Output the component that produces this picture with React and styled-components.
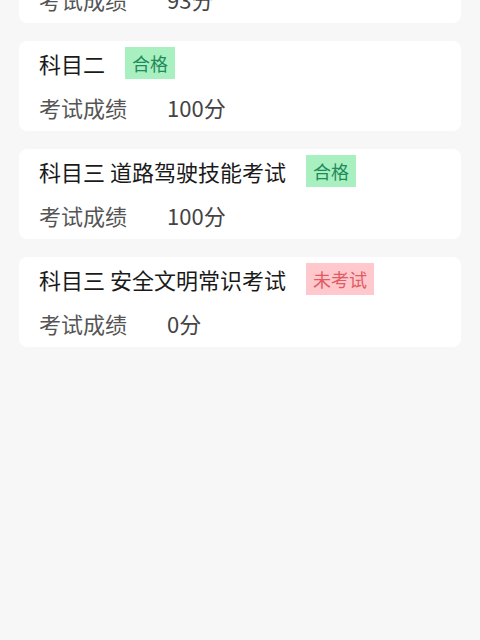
import React from 'react';
import styled, { createGlobalStyle } from 'styled-components';

const GlobalStyle = createGlobalStyle`
  html, body {
    margin: 0;
    padding: 0;
    background: #f7f7f7;
    font-family: "Noto Sans CJK SC", "Noto Sans", sans-serif;
  }
`;

const Page = styled.div`
  min-height: 100vh;
  background: #f7f7f7;
  overflow: hidden;
`;

const List = styled.div`
  display: flex;
  flex-direction: column;
  gap: 18px;
  padding: 0 19px;
  margin-top: -67px; /* list is scrolled, first card is partly hidden */
`;

const Card = styled.div`
  background: #fff;
  border-radius: 8px;
  padding: 6px 20px 8px;
  height: 90px;
  box-sizing: border-box;
`;

const Header = styled.div`
  display: flex;
  align-items: center;
  height: 32px;
`;

const Title = styled.span`
  font-size: 22px;
  color: #1a1a1a;
  margin-right: 20px;
  white-space: nowrap;
`;

const Badge = styled.span`
  display: inline-flex;
  align-items: center;
  height: 32px;
  padding: 0 7px;
  font-size: 18px;
  background: ${p => (p.$pass ? '#a9f0c0' : '#ffc8cc')};
  color: ${p => (p.$pass ? '#1f8a5a' : '#e25a64')};
`;

const Row = styled.div`
  display: flex;
  align-items: center;
  height: 32px;
  margin-top: 12px;
  font-size: 22px;
`;

const Label = styled.span`
  width: 128px;
  color: #555;
`;

const Score = styled.span`
  color: #444;
`;

const exams = [
  { name: '科目一', pass: true, status: '合格', score: 93 },
  { name: '科目二', pass: true, status: '合格', score: 100 },
  { name: '科目三 道路驾驶技能考试', pass: true, status: '合格', score: 100 },
  { name: '科目三 安全文明常识考试', pass: false, status: '未考试', score: 0 },
];

export default function App() {
  return (
    <Page>
      <GlobalStyle />
      <List>
        {exams.map(e => (
          <Card key={e.name}>
            <Header>
              <Title>{e.name}</Title>
              <Badge $pass={e.pass}>{e.status}</Badge>
            </Header>
            <Row>
              <Label>考试成绩</Label>
              <Score>{e.score}分</Score>
            </Row>
          </Card>
        ))}
      </List>
    </Page>
  );
}
